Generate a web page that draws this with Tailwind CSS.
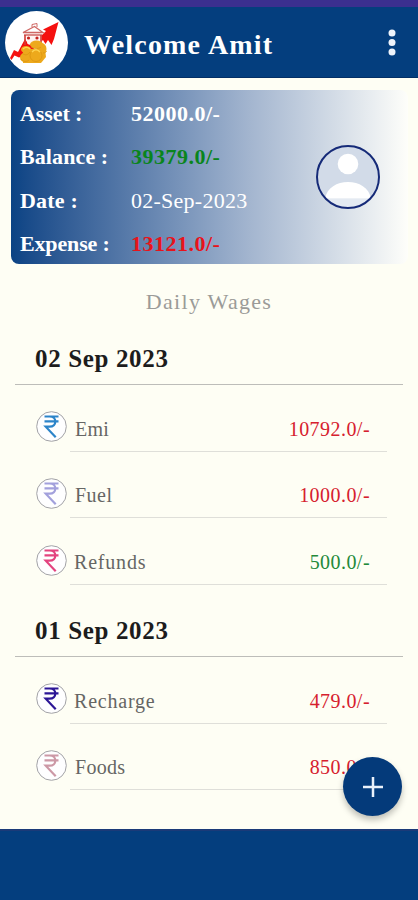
<!DOCTYPE html>
<html lang="en">
<head>
  <meta charset="UTF-8" />
  <meta name="viewport" content="width=device-width, initial-scale=1.0" />
  <title>Daily Wages</title>
  <script src="https://cdn.jsdelivr.net/npm/@tailwindcss/browser@4"></script>
</head>
<body class="bg-[#fefef4] font-['Liberation_Serif',serif]">

  <div class="relative w-[418px] h-[900px] overflow-hidden flex flex-col">

    <!-- Status bar -->
    <div class="h-[7px] bg-[#3b2f8f] shrink-0"></div>

    <!-- App bar -->
    <header class="h-[71px] shrink-0 bg-[#043e7e] border-b border-[#032f66] flex items-center pl-[5px] pr-[21px]">
      <svg class="w-[63px] h-[63px] shrink-0" viewBox="0 0 63 63">
        <circle cx="31.5" cy="31.5" r="31.5" fill="#fff" />
        <path d="M5 47L9 39L13 41L20 28L24 34L36 25L41 20L38 18.500L53.500 11L49 28L46.500 34L43 29L40.500 33L38 29L24 42L14 46.500L9.500 44.500L6.500 49z" fill="#f5100f" />
        <path d="M20.500 22h16v11h-14z" fill="#fff4f2" />
        <path d="M18 21.500l11.500-6 8.500 6zM19 24h18" fill="#fff" stroke="#cf6865" stroke-width="1.300" />
        <path d="M27 16v-2.500l5-1V16" fill="none" stroke="#cf6865" />
        <path d="M20 24v10M36 24v9" stroke="#d43b35" stroke-width="1.600" />
        <circle cx="23.500" cy="27" r="1.600" fill="#c52420" />
        <circle cx="32" cy="27" r="1.600" fill="#c52420" />
        <g fill="#eda91c">
          <ellipse cx="21" cy="38.500" rx="5" ry="3.500" />
          <ellipse cx="20.500" cy="46.500" rx="5.500" ry="5" />
          <ellipse cx="31.500" cy="33.500" rx="6.500" ry="4" />
          <ellipse cx="36.500" cy="38" rx="5" ry="6" />
          <path d="M18 38h22l1 8-5 6H18z" />
          <circle cx="31" cy="45" r="7" />
        </g>
        <g fill="none" stroke="#d8900f" stroke-width=".7">
          <circle cx="31" cy="44.500" r="6" />
          <path d="M17 42c3 3 6 2 8-1M26 36c3 2 8 2 10 0M16 48c2 3 6 3 8 1M38 42c2 0 3-1 4-2" />
        </g>
        <path d="M27 41c2-3 6-3 8 0M18 38c2-2 5-2 7 0" stroke="#ffd451" stroke-width="1.500" fill="none" />
      </svg>
      <h1 class="ml-[16px] pt-[5px] text-[28px] leading-none font-bold tracking-[1.2px] text-white whitespace-nowrap">Welcome Amit</h1>
      <svg class="ml-auto w-[10px] h-[28px]" viewBox="0 0 10 28" fill="#eef3fb">
        <circle cx="5" cy="5" r="3.500" />
        <circle cx="5" cy="14.500" r="3.500" />
        <circle cx="5" cy="24" r="3.500" />
      </svg>
    </header>

    <!-- Summary card -->
    <section class="mt-3 ml-[11px] mr-[10px] h-[174px] shrink-0 rounded-lg bg-linear-to-r from-[#0a4384] via-[#a3b5cf] via-60% to-[#fefefa] flex items-center">
      <div class="flex flex-col h-full text-[22px] leading-none text-white whitespace-nowrap">
        <div class="flex flex-1 items-center pt-1 font-bold"><span class="w-[111px] ml-[9px] tracking-[-0.1px]">Asset :</span><span class="tracking-[0.5px]">52000.0/-</span></div>
        <div class="flex flex-1 items-center pt-1 font-bold"><span class="w-[111px] ml-[9px] tracking-[0.1px]">Balance :</span><span class="tracking-[0.5px] text-[#09851c]">39379.0/-</span></div>
        <div class="flex flex-1 items-center pt-1"><span class="w-[111px] ml-[9px] font-bold tracking-[0.2px]">Date :</span><span class="tracking-[0.25px]">02-Sep-2023</span></div>
        <div class="flex flex-1 items-center pt-1 font-bold"><span class="w-[111px] ml-[9px] tracking-[-0.15px]">Expense :</span><span class="tracking-[0.5px] text-[#e8131b]">13121.0/-</span></div>
      </div>
      <svg class="ml-auto mr-[27px] w-[66px] h-[66px]" viewBox="0 0 66 66">
        <circle cx="33" cy="33" r="31" fill="#d2dbe8" />
        <path d="M10 54.500h46a31 31 0 0 1-46 0z" fill="#e4eaf2" />
        <circle cx="33" cy="20" r="10.300" fill="#fff" />
        <path d="M10 54.500c2-11 12-16.500 23-16.500s21 5.500 23 16.500z" fill="#fff" />
        <circle cx="33" cy="33" r="31" fill="none" stroke="#152a78" stroke-width="2" />
      </svg>
    </section>

    <h2 class="mt-[27px] shrink-0 text-center text-[22px] leading-[22px] tracking-[1.3px] text-[#9b9b98]">Daily Wages</h2>

    <!-- Entries grouped by day -->
    <main id="days" class="mt-[-1px] flex flex-col"></main>

    <!-- Add button -->
    <button class="absolute z-10 left-[343px] top-[757px] w-[59px] h-[59px] rounded-full bg-[#043a7a] shadow-[0_4px_6px_rgba(0,0,0,0.25)] flex items-center justify-center" aria-label="Add">
      <svg class="w-[22px] h-[22px]" viewBox="0 0 22 22" stroke="#eaf1fb" stroke-width="2.500">
        <path d="M11 1v20M1 11h20" />
      </svg>
    </button>

    <footer class="mt-auto h-[71px] shrink-0 bg-[#043e7e] border-t-2 border-[#1b3a78]"></footer>
  </div>

  <script>
    const days = [
      {
        date: "02 Sep 2023",
        height: "h-[73px]",
        entries: [
          { name: "Emi", amount: "10792.0/-", icon: "#2c84c9", color: "text-[#d6202e]", spacing: "tracking-[0.3px]" },
          { name: "Fuel", amount: "1000.0/-", icon: "#a2a0dc", color: "text-[#d6202e]", spacing: "tracking-[0.5px]" },
          { name: "Refunds", amount: "500.0/-", icon: "#e3437f", color: "text-[#23893a]", spacing: "tracking-[0.8px] -ml-px" }
        ]
      },
      {
        date: "01 Sep 2023",
        height: "h-[72px]",
        entries: [
          { name: "Recharge", amount: "479.0/-", icon: "#2c1696", color: "text-[#d6202e]", spacing: "tracking-[0.8px] -ml-px" },
          { name: "Foods", amount: "850.0/-", icon: "#cc98a6", color: "text-[#d6202e]", spacing: "tracking-[0.3px]" }
        ]
      }
    ];

    function entryRow(entry) {
      return `
        <div class="h-[66.7px] pl-[36px] pr-[31px] flex items-end">
          <svg class="w-[31px] h-[31px] mb-[9.5px] shrink-0" viewBox="0 0 31 31" fill="none">
            <circle cx="15.500" cy="15.500" r="14.800" fill="#fefeff" stroke="#a2a2a6" />
            <path d="M8.500 5.500h14M8.500 10.300h14M9 5.500h4.500c7.800 0 7.800 10.200 0 10.200H9.700L19.700 26.300" stroke="${entry.icon}" stroke-width="2.200" />
          </svg>
          <div class="ml-[3px] flex-1 h-[36px] border-b border-[#dfdfd9] flex justify-between pl-[5px] pr-[17px] text-[20px] leading-[26px]">
            <span class="text-[#666664] ${entry.spacing}">${entry.name}</span>
            <span class="tracking-[0.45px] ${entry.color}">${entry.amount}</span>
          </div>
        </div>`;
    }

    document.getElementById("days").innerHTML = days.map(day => `
      <section>
        <h3 class="${day.height} mx-[15px] pl-[20px] pb-[12px] border-b border-[#bdbdb9] flex items-end text-[25px] leading-[27px] font-bold tracking-[0.65px] text-[#1c1c1c]">${day.date}</h3>
        ${day.entries.map(entryRow).join("")}
      </section>`).join("");
  </script>
</body>
</html>
